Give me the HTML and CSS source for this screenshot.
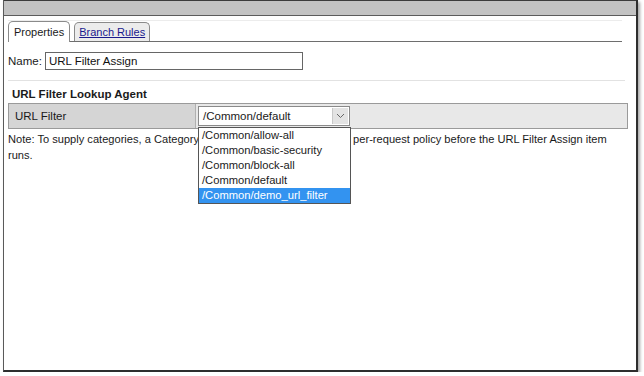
FILE: index.html
```html
<!DOCTYPE html>
<html lang="en">
<head>
    <meta charset="UTF-8">
    <meta name="viewport" content="width=device-width, initial-scale=1.0">
    <title>URL Filter Assign</title>
    <link rel="stylesheet" href="styles.css">
</head>
<body>

<div class="window">
    <div class="titlebar"></div>

    <div class="content">
        <!-- 탭 -->
        <div class="tabs">
            <span class="tab active">Properties</span>
            <a class="tab link" href="#">Branch Rules</a>
        </div>

        <div class="name-row">
            <label for="itemName">Name:</label>
            <input id="itemName" class="name-input" type="text" value="URL Filter Assign">
        </div>

        <div class="sep"></div>

        <h3 class="section-title">URL Filter Lookup Agent</h3>

        <div class="agent-row">
            <div class="cell-label">URL Filter</div>
            <div class="cell-value">
                <div class="select">
                    <span class="select-text">/Common/default</span>
                    <span class="select-btn">
                        <svg width="9" height="6" viewBox="0 0 9 6"><path d="M1 1 L4.5 4.5 L8 1" fill="none" stroke="#666" stroke-width="1"/></svg>
                    </span>
                    <!-- 열린 목록 -->
                    <ul class="options">
                        <li>/Common/allow-all</li>
                        <li>/Common/basic-security</li>
                        <li>/Common/block-all</li>
                        <li>/Common/default</li>
                        <li class="selected">/Common/demo_url_filter</li>
                    </ul>
                </div>
            </div>
        </div>

        <p class="note">Note: To supply categories, a Category Lookup item must occur in the per-request policy before the URL Filter Assign item runs.</p>
    </div>
</div>

</body>
</html>
```

FILE: styles.css
```css
body {
    margin: 0;
    background-color: #ffffff;
    font-family: "Liberation Sans", Arial, sans-serif;
    font-size: 11px;
    color: #1a1a1a;
}
/* 창 테두리 */
.window {
    margin-left: 3px;
    width: 632px;
    height: 370px;
    border-left: 1px solid #5a5a5a;
    border-right: 2px solid #2e2e2e;
    border-bottom: 2px solid #2e2e2e;
    box-shadow: 2px 2px 3px rgba(0, 0, 0, 0.35);
    display: flex;
    flex-direction: column;
}
.titlebar {
    height: 14px;
    background-color: #c3c3c3;
    border-top: 1px solid #3c3c3c;
    border-bottom: 1px solid #5c5c5c;
}
.content {
    padding: 4px 8px 0 4px;
}
/* 탭 스타일 */
.tabs {
    display: flex;
    gap: 4px;
    height: 20px;
    border-bottom: 1px solid #6e6e6e;
    margin-right: 6px;
    border-top: 1px solid #ececec;
}
.tab {
    display: flex;
    align-items: center;
    border: 1px solid #8a8a8a;
    border-bottom: none;
    border-radius: 5px 5px 0 0;
    font-size: 11px;
    height: 19px;
}
.tab.active {
    background-color: #ffffff;
    height: 20px;
    margin-bottom: -1px;
    padding: 0 5px 0 5px;
}
.tab.link {
    background-color: #ececec;
    color: #1a1a8e;
    text-decoration: underline;
    margin-top: 1px;
    height: 18px;
    padding: 0 4px;
}
.name-row {
    display: flex;
    align-items: center;
    gap: 3px;
    margin-top: 10px;
}
.name-row label {
    font-size: 11.5px;
}
.name-input {
    width: 250px;
    height: 14px;
    border: 1px solid #666;
    padding: 1px 3px;
    font-family: "Liberation Sans", Arial, sans-serif;
    font-size: 11.5px;
    color: #111;
    margin: 0;
}
.sep {
    height: 1px;
    background-color: #e2e2e2;
    margin-top: 10px;
    margin-right: 3px;
}
.section-title {
    font-size: 11.5px;
    font-weight: bold;
    margin: 5px 0 0 4px;
    height: 17px;
    line-height: 17px;
}
/* 행 */
.agent-row {
    display: flex;
    height: 24px;
    border: 1px solid #9a9a9a;
    background-color: #e8e8e8;
}
.cell-label {
    width: 180px;
    background-color: #d5d5d5;
    border-right: 1px solid #b0b0b0;
    display: flex;
    align-items: center;
    padding-left: 6px;
    font-size: 11.5px;
}
.cell-value {
    flex: 1;
    display: flex;
    align-items: center;
    padding-left: 2px;
}
.select {
    position: relative;
    width: 150px;
    height: 18px;
    background-color: #ffffff;
    border: 1px solid #8a8a8a;
    display: flex;
    align-items: center;
}
.select-text {
    flex: 1;
    padding-left: 4px;
    font-size: 11.5px;
}
.select-btn {
    width: 15px;
    height: 16px;
    background-color: #e3e3e3;
    border-left: 1px solid #c8c8c8;
    margin-right: 1px;
    display: flex;
    align-items: center;
    justify-content: center;
}
.options {
    position: absolute;
    top: 20px;
    left: -1px;
    width: 151px;
    margin: 0;
    padding: 0;
    list-style: none;
    background-color: #ffffff;
    border: 1px solid #555;
    z-index: 2;
}
.options li {
    height: 15px;
    line-height: 15px;
    padding-left: 3px;
    font-size: 11.2px;
}
.options li.selected {
    background-color: #3393f0;
    color: #ffffff;
}
.note {
    margin: 2px 0 0 0;
    line-height: 16px;
    font-size: 11.1px;
    padding-right: 4px;
}
```
